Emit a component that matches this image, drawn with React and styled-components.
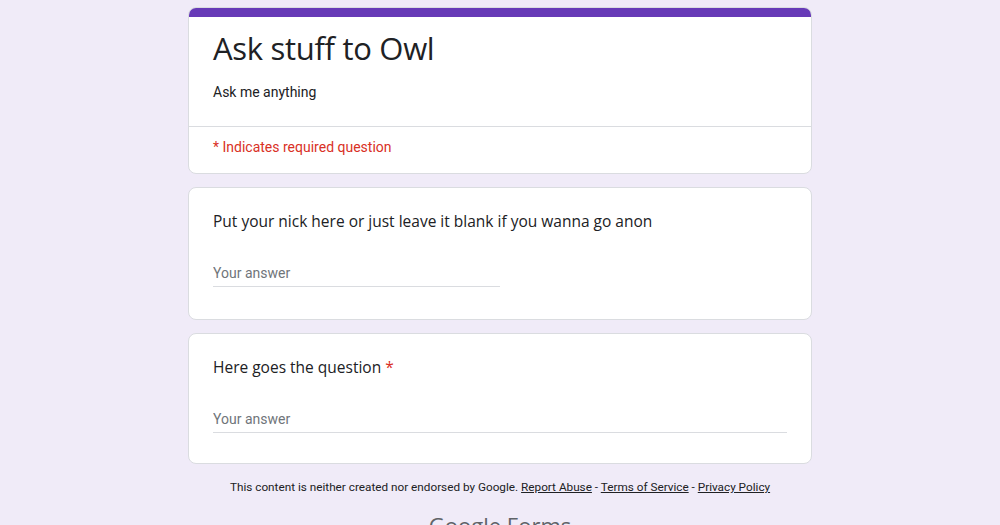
import React from 'react';
import styled, { createGlobalStyle } from 'styled-components';

const GlobalStyle = createGlobalStyle`
  html, body {
    margin: 0;
    padding: 0;
    background-color: #f0ebf8;
  }
  body {
    font-family: Roboto, "Noto Sans", Arial, sans-serif;
    color: #202124;
  }
`;

const Page = styled.div`
  display: flex;
  flex-direction: column;
  align-items: center;
  padding-top: 7px;
  height: 525px;
  box-sizing: border-box;
  overflow: hidden;
`;

const Column = styled.div`
  width: 624px;
  display: flex;
  flex-direction: column;
  gap: 13px;
`;

const Card = styled.div`
  background-color: #fff;
  border: 1px solid #dadce0;
  border-radius: 8px;
  overflow: hidden;
  box-sizing: border-box;
  padding: ${(p) => p.$pad || '0'};
`;

const TopBar = styled.div`
  height: 10px;
  background-color: #673ab7;
  margin: -1px -1px 0;
`;

const Header = styled.div`
  padding: 9px 24px 24px;
  border-bottom: 1px solid #dadce0;
`;

const Title = styled.div`
  font-family: "Open Sans", Roboto, sans-serif;
  font-size: 31px;
  line-height: 44px;
  color: #202124;
  letter-spacing: -0.3px;
`;

const Description = styled.div`
  font-size: 14px;
  line-height: 20px;
  margin-top: 12px;
  color: #202124;
`;

const Required = styled.div`
  padding: 10px 24px 16px;
  font-size: 14px;
  line-height: 20px;
  color: #d93025;
`;

const Question = styled.div`
  font-family: "Open Sans", Roboto, sans-serif;
  font-size: 15.5px;
  line-height: 24px;
  color: #202124;
`;

const Star = styled.span`
  color: #d93025;
  margin-left: 4px;
`;

const Answer = styled.input`
  display: block;
  width: ${(p) => p.$width};
  margin-top: 30px;
  border: none;
  border-bottom: 1px solid #dadce0;
  outline: none;
  padding: 0 0 3px;
  font-family: Roboto, sans-serif;
  font-size: 14px;
  line-height: 20px;
  color: #202124;
  background: transparent;
  &::placeholder {
    color: #70757a;
  }
`;

const Footer = styled.div`
  margin-top: 15px;
  text-align: center;
  font-size: 11.75px;
  line-height: 16px;
  color: #202124;
`;

const FootLink = styled.a`
  color: #202124;
  text-decoration: underline;
`;

const Brand = styled.div`
  margin-top: 16px;
  text-align: center;
  font-family: "Open Sans", Roboto, sans-serif;
  font-size: 22px;
  line-height: 28px;
  color: #5f6368;
`;

export default function App() {
  return (
    <>
      <GlobalStyle />
      <Page>
        <Column>
          <Card>
            <TopBar />
            <Header>
              <Title>Ask stuff to Owl</Title>
              <Description>Ask me anything</Description>
            </Header>
            <Required>* Indicates required question</Required>
          </Card>
          <Card $pad="21px 24px 32px">
            <Question>Put your nick here or just leave it blank if you wanna go anon</Question>
            <Answer $width="50%" placeholder="Your answer" />
          </Card>
          <Card $pad="21px 24px 30px">
            <Question>
              Here goes the question<Star>*</Star>
            </Question>
            <Answer $width="100%" placeholder="Your answer" />
          </Card>
        </Column>
        <Footer>
          This content is neither created nor endorsed by Google.{' '}
          <FootLink href="#">Report Abuse</FootLink> -{' '}
          <FootLink href="#">Terms of Service</FootLink> -{' '}
          <FootLink href="#">Privacy Policy</FootLink>
        </Footer>
        <Brand>Google Forms</Brand>
      </Page>
    </>
  );
}
